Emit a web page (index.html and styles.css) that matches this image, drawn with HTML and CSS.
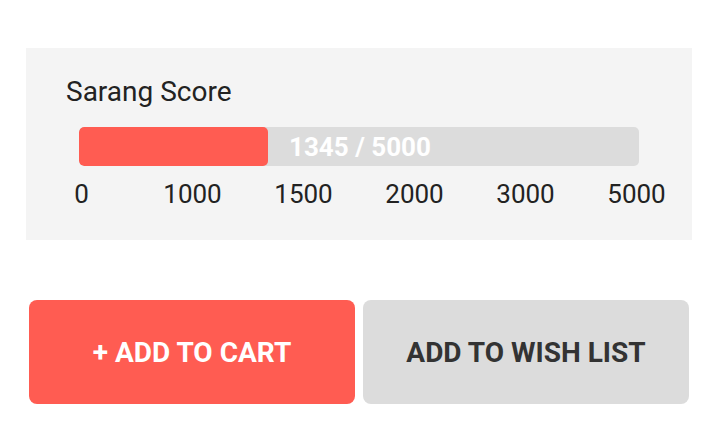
FILE: index.html
```html
<!DOCTYPE html>
<html lang="en">
<head>
  <meta charset="UTF-8" />
  <meta name="viewport" content="width=device-width, initial-scale=1.0"/>
  <title>Sarang Score</title>
  <link rel="stylesheet" href="styles.css">
</head>
<body>
  <div class="score-panel">
    <div class="score-title">Sarang Score</div>
    <div class="score-bar">
      <div class="score-fill" style="width: 189px;"></div>
      <div class="score-text">1345 / 5000</div>
    </div>
    <div class="score-scale">
      <span>0</span>
      <span>1000</span>
      <span>1500</span>
      <span>2000</span>
      <span>3000</span>
      <span>5000</span>
    </div>
  </div>

  <div class="actions">
    <button class="btn btn-cart">+ ADD TO CART</button>
    <button class="btn btn-wish">ADD TO WISH LIST</button>
  </div>
</body>
</html>
```

FILE: styles.css
```css
body {
  margin: 0;
  font-family: Roboto, 'Noto Sans', sans-serif;
  background: #fff;
  color: #222;
}
.score-panel {
  margin: 48px 0 0 26px;
  width: 666px;
  height: 192px;
  box-sizing: border-box;
  padding-top: 29px;
  background: #f4f4f4;
}
.score-title {
  padding-left: 40px;
  font-size: 28px;
  line-height: 30px;
  color: #222;
}
.score-bar {
  display: flex;
  align-items: center;
  margin: 20px 0 0 53px;
  width: 560px;
  height: 39px;
  border-radius: 5px;
  background: #dcdcdc;
  overflow: hidden;
}
.score-fill {
  height: 100%;
  background: #ff5c52;
  border-radius: 5px;
}
.score-text {
  margin-left: 21px;
  font-size: 26px;
  font-weight: bold;
  color: #fff;
  line-height: 30px;
}
.score-scale {
  display: grid;
  grid-template-columns: repeat(6, 1fr);
  margin-top: 13px;
  font-size: 26px;
  line-height: 30px;
  text-align: center;
  color: #222;
}
.actions {
  display: flex;
  gap: 8px;
  margin: 60px 0 0 29px;
  width: 660px;
}
.btn {
  flex: 1;
  height: 104px;
  border: none;
  border-radius: 8px;
  font-family: Roboto, 'Noto Sans', sans-serif;
  font-size: 28px;
  font-weight: bold;
  cursor: pointer;
}
.btn-cart {
  background: #ff5c52;
  color: #fff;
}
.btn-wish {
  background: #dcdcdc;
  color: #333;
}
```
